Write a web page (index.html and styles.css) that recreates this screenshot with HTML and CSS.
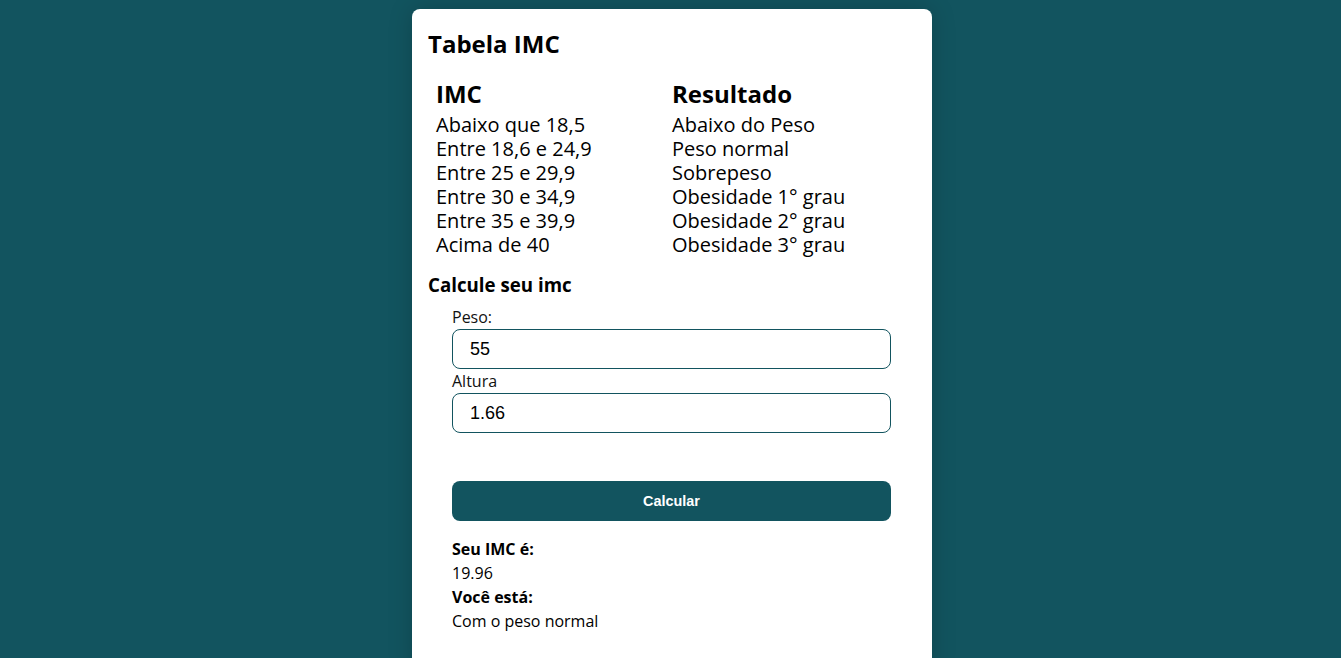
FILE: index.html
```html
<!DOCTYPE html>
<html lang="pt-BR">
<head>
<meta charset="utf-8">
<title>Tabela IMC</title>
<link rel="stylesheet" href="styles.css">
</head>
<body>
<main class="card">
  <h1 class="title">Tabela IMC</h1>
  <div class="table">
    <div class="col">
      <h2 class="col-head">IMC</h2>
      <p class="cell">Abaixo que 18,5</p>
      <p class="cell">Entre 18,6 e 24,9</p>
      <p class="cell">Entre 25 e 29,9</p>
      <p class="cell">Entre 30 e 34,9</p>
      <p class="cell">Entre 35 e 39,9</p>
      <p class="cell">Acima de 40</p>
    </div>
    <div class="col">
      <h2 class="col-head">Resultado</h2>
      <p class="cell">Abaixo do Peso</p>
      <p class="cell">Peso normal</p>
      <p class="cell">Sobrepeso</p>
      <p class="cell">Obesidade 1° grau</p>
      <p class="cell">Obesidade 2° grau</p>
      <p class="cell">Obesidade 3° grau</p>
    </div>
  </div>
  <h3 class="subtitle">Calcule seu imc</h3>
  <form class="form">
    <label class="label" for="peso">Peso:</label>
    <input class="input" id="peso" type="text" value="55">
    <label class="label" for="altura">Altura</label>
    <input class="input" id="altura" type="text" value="1.66">
    <button class="button" type="button">Calcular</button>
    <div class="result">
      <p class="res-label">Seu IMC é:</p>
      <p class="res-value">19.96</p>
      <p class="res-label">Você está:</p>
      <p class="res-value">Com o peso normal</p>
    </div>
  </form>
</main>
</body>
</html>
```
FILE: styles.css
```css
html {
  overflow: hidden;
}
body {
  margin: 0;
  padding: 9px 0 0 3px;
  background: #12545f;
  font-family: "Open Sans", "Liberation Sans", sans-serif;
  color: #000;
  display: flex;
  justify-content: center;
}
.card {
  width: 520px;
  box-sizing: border-box;
  background: #fff;
  border-radius: 8px;
  padding: 19px 16px 40px;
  box-shadow: 0 0 24px rgba(0, 0, 0, 0.18);
}
.title {
  margin: 0;
  font-size: 24px;
  line-height: 32px;
  font-weight: 700;
}
.table {
  display: grid;
  grid-template-columns: 236px 1fr;
  padding-left: 8px;
  margin-top: 16px;
}
.col-head {
  margin: 0 0 1px;
  font-size: 24px;
  line-height: 36px;
  font-weight: 700;
}
.cell {
  margin: 0;
  font-size: 20px;
  line-height: 24px;
}
.subtitle {
  margin: 14px 0 0;
  font-size: 18.72px;
  line-height: 28px;
  font-weight: 700;
}
.form {
  display: flex;
  flex-direction: column;
  padding: 8px 25px 0 24px;
}
.label {
  font-size: 16px;
  line-height: 20px;
  color: #111;
}
.input {
  height: 40px;
  box-sizing: border-box;
  margin: 2px 0 2px;
  border: 1px solid #12545f;
  border-radius: 8px;
  padding: 0 17px;
  font-family: "Liberation Sans", Arial, sans-serif;
  font-size: 18px;
  color: #000;
  outline: none;
}
.button {
  margin-top: 46px;
  height: 40px;
  border: none;
  border-radius: 8px;
  background: #12545f;
  color: #fff;
  font-family: "Liberation Sans", Arial, sans-serif;
  font-size: 14.4px;
  font-weight: 700;
}
.result {
  margin-top: 16px;
}
.res-label {
  margin: 0;
  font-size: 16px;
  line-height: 24px;
  font-weight: 700;
}
.res-value {
  margin: 0;
  font-size: 16px;
  line-height: 24px;
}
```
